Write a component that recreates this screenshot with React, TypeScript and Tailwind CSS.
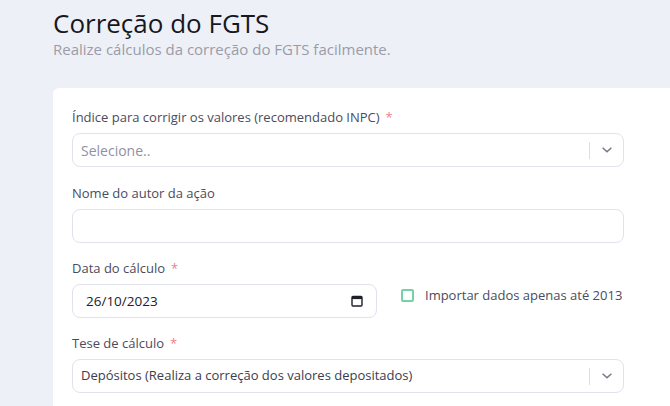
import React from "react";

const Chevron = () => (
  <svg width="14" height="14" viewBox="0 0 20 20" className="text-[#7a7c8c]">
    <path d="M4.5 7.5 L10 12.5 L15.5 7.5" fill="none" stroke="currentColor" strokeWidth="2.4" strokeLinecap="round" strokeLinejoin="round" />
  </svg>
);

const Select = ({ text, placeholder }: { text: string; placeholder?: boolean }) => (
  <div className="flex h-[34px] items-center rounded-lg border border-[#e1e2ec] bg-white">
    <div className={`flex-1 pl-[8px] ${placeholder ? "text-[14px] text-[#8f919f]" : "text-[13px] text-[#3b3d4d]"}`}>{text}</div>
    <div className="h-[17px] w-px bg-[#dcdde5]" />
    <div className="flex w-[33px] items-center justify-center">
      <Chevron />
    </div>
  </div>
);

const Label = ({ children, req }: { children: React.ReactNode; req?: boolean }) => (
  <div className="mb-[7px] text-[13px] leading-[18px] text-[#4a4c5e]">
    {children}
    {req && <span className="ml-[6px] text-[#f0808a]">*</span>}
  </div>
);

export default function App() {
  return (
    <div className="h-[406px] w-[670px] overflow-hidden bg-[#eef0f7] pl-[53px]" style={{ fontFamily: "'Open Sans', sans-serif" }}>
      <div className="pt-[6px]">
        <h1 className="text-[26px] leading-[34px] text-[#17181f]">Correção do FGTS</h1>
        <p className="text-[15px] leading-[18px] text-[#9a9ca8]">Realize cálculos da correção do FGTS facilmente.</p>
      </div>
      <div className="mt-[30px] w-[640px] rounded-l-md bg-white pl-[19px] pr-[43px] pt-[20px] pb-[20px]">
        <div className="w-[552px]">
          <Label req>Índice para corrigir os valores (recomendado INPC)</Label>
          <Select text="Selecione.." placeholder />
          <div className="mt-[17px]">
            <Label>Nome do autor da ação</Label>
            <div className="h-[34px] rounded-lg border border-[#e1e2ec] bg-white" />
          </div>
          <div className="mt-[16px] flex items-end">
            <div className="w-[305px] shrink-0">
              <Label req>Data do cálculo</Label>
              <div className="flex h-[34px] items-center rounded-lg border border-[#e1e2ec] bg-white pl-[13px] pr-[13px]">
                <div className="flex-1 text-[13.5px] text-[#1f2029]">26/10/2023</div>
                <svg width="12" height="12" viewBox="0 0 12 12">
                  <rect x="1" y="1.5" width="10" height="9.5" rx="1" fill="none" stroke="#1f2029" strokeWidth="1.4" />
                  <rect x="1" y="1.5" width="10" height="2.6" fill="#1f2029" />
                </svg>
              </div>
            </div>
            <div className="mb-[13px] ml-[24px] flex items-center whitespace-nowrap">
              <div className="h-[13px] w-[13px] rounded-[2px] border-2 border-[#74d3a2] bg-white" />
              <span className="ml-[11px] text-[13px] leading-[20px] text-[#4a4c5e]">Importar dados apenas até 2013</span>
            </div>
          </div>
          <div className="mt-[16px]">
            <Label req>Tese de cálculo</Label>
            <Select text="Depósitos (Realiza a correção dos valores depositados)" />
          </div>
        </div>
      </div>
    </div>
  );
}
